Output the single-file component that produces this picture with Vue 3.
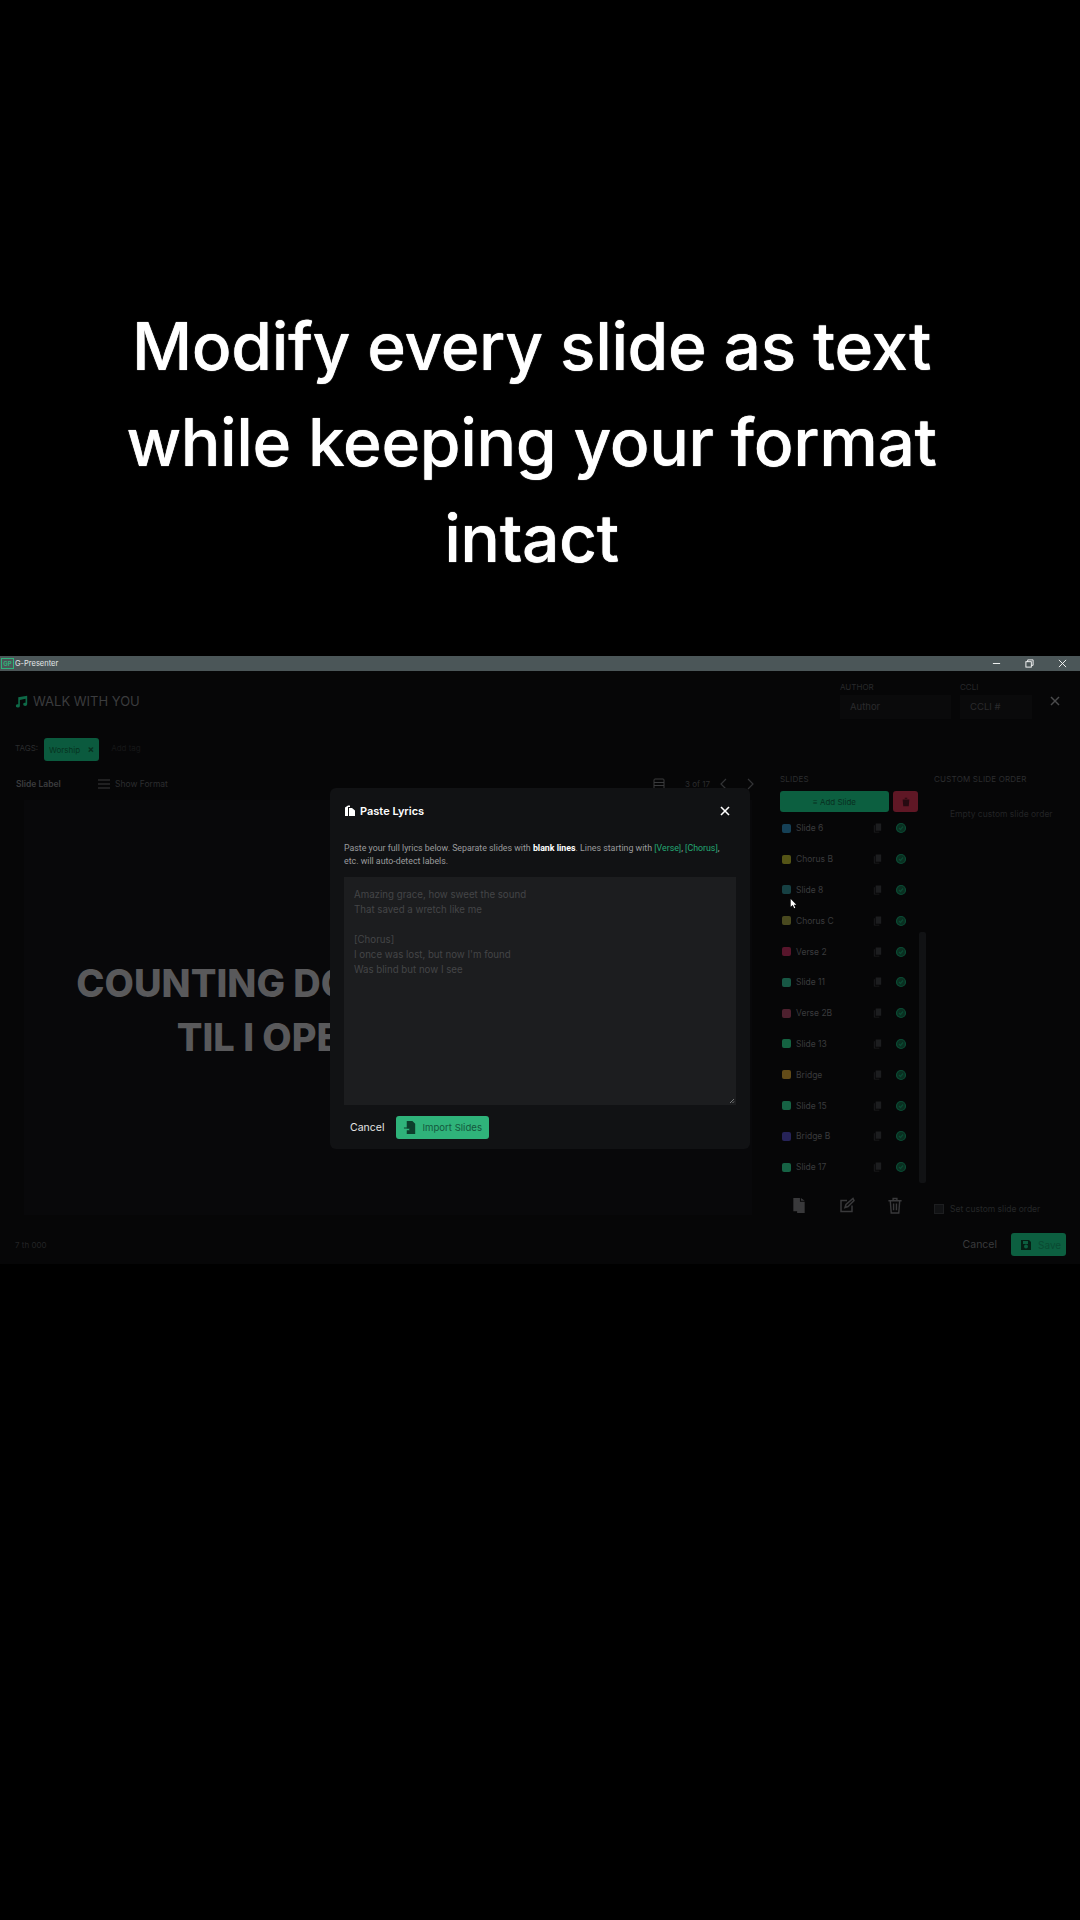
<template>
  <div class="page">
    <div class="caption">Modify every slide as text<br />while keeping your format<br />intact</div>

    <div class="app">
      <div class="titlebar">
        <span class="app-logo">GP</span>
        <span class="app-name">G-Presenter</span>
        <div class="win-btns">
          <svg viewBox="0 0 10 10"><line x1="1" y1="5" x2="9" y2="5" /></svg>
          <svg viewBox="0 0 10 10"><rect x="1" y="3" width="6" height="6" /><polyline points="3 3 3 1 9 1 9 7 7 7" /></svg>
          <svg viewBox="0 0 10 10"><line x1="1" y1="1" x2="9" y2="9" /><line x1="9" y1="1" x2="1" y2="9" /></svg>
        </div>
      </div>

      <div class="header">
        <svg class="note-icon" viewBox="0 0 16 16" fill="currentColor">
          <path d="M15 1v10.5a2.5 2 0 1 1-2-2V4.6L6 6v7.5a2.5 2 0 1 1-2-2V2.8z" />
        </svg>
        <span class="song-title">WALK WITH YOU</span>
        <div class="fields">
          <div class="field author">
            <label>AUTHOR</label>
            <div class="input">Author</div>
          </div>
          <div class="field key">
            <label>CCLI</label>
            <div class="input">CCLI #</div>
          </div>
        </div>
        <svg class="header-close" viewBox="0 0 10 10"><line x1="1" y1="1" x2="9" y2="9" /><line x1="9" y1="1" x2="1" y2="9" /></svg>
      </div>

      <div class="tags">
        <span class="tags-label">TAGS:</span>
        <span class="tag">Worship <b>×</b></span>
        <span class="add-tag">Add tag</span>
      </div>

      <div class="main">
        <div class="editor">
          <div class="toolbar">
            <span class="slide-label">Slide Label</span>
            <svg class="tool-icon lines" viewBox="0 0 12 12"><line x1="0" y1="2" x2="12" y2="2" /><line x1="0" y1="6" x2="12" y2="6" /><line x1="0" y1="10" x2="12" y2="10" /></svg>
            <span class="show-format">Show Format</span>
            <svg class="tool-icon grid-icon" viewBox="0 0 12 12"><rect x="1" y="1" width="10" height="10" rx="1" /><line x1="1" y1="4.5" x2="11" y2="4.5" /><line x1="1" y1="7.5" x2="11" y2="7.5" /></svg>
            <span class="count">3 of 17</span>
            <svg class="chev" viewBox="0 0 8 12"><polyline points="6 1 1 6 6 11" /></svg>
            <svg class="chev" viewBox="0 0 8 12"><polyline points="2 1 7 6 2 11" /></svg>
          </div>
          <div class="preview">
            <div class="preview-text">COUNTING DOWN THE SECONDS<br />TIL I OPEN THE DOORS</div>
          </div>
        </div>

        <div class="slides">
          <div class="col-title">SLIDES</div>
          <div class="slide-actions">
            <button class="add-btn">≡ Add Slide</button>
            <button class="del-btn">
              <svg viewBox="0 0 12 12" fill="currentColor"><path d="M2 3h8l-.7 8H2.7zM4.500 1h3v1h-3z" /></svg>
            </button>
          </div>
          <div class="slide-list">
            <div v-for="s in slideRows" :key="s.name" class="slide-row">
              <span class="swatch" :style="{ background: s.color }"></span>
              <span class="slide-name">{{ s.name }}</span>
              <svg class="row-copy" viewBox="0 0 12 12" fill="currentColor"><path d="M4 1h6v8H4zM2 3h1v7h5v1H2z" /></svg>
              <svg class="row-ok" viewBox="0 0 12 12"><circle cx="6" cy="6" r="4.500" /><polyline points="4 6 5.500 7.500 8 4.500" /></svg>
            </div>
            <div class="scroll-thumb"></div>
          </div>
          <div class="slide-tools">
            <svg viewBox="0 0 16 18" fill="currentColor"><path d="M2 1h7v4h5v12H6V15H2zM10 1l4 3h-4z" /></svg>
            <svg viewBox="0 0 16 16" fill="none" stroke="currentColor" stroke-width="1.500"><path d="M8 3H2v11h11V8" /><path d="M6 10l1-3 7-6 1 2-6 6z" /></svg>
            <svg viewBox="0 0 16 18" fill="none" stroke="currentColor" stroke-width="1.500"><path d="M1 4h14M6 4V1.500h4V4M3 4l1 13h8l1-13M6.500 7v7M9.500 7v7" /></svg>
          </div>
        </div>

        <div class="custom">
          <div class="col-title">CUSTOM SLIDE ORDER</div>
          <div class="custom-empty">Empty custom slide order</div>
          <div class="custom-check">
            <span class="checkbox"></span>
            <span>Set custom slide order</span>
          </div>
        </div>
      </div>

      <div class="footer">
        <span class="footer-info">7 th 000</span>
        <span class="footer-cancel">Cancel</span>
        <button class="save-btn">
          <svg viewBox="0 0 12 12" fill="currentColor"><path d="M1 1h8l2 2v8H1zM3 2v3h5V2zM4 7.500a2 2 0 1 0 4 0a2 2 0 1 0-4 0z" fill-rule="evenodd" /></svg>
          Save
        </button>
      </div>

      <!-- paste dialog sits over the dimmed editor -->
      <div class="overlay">
        <div class="modal">
          <div class="modal-head">
            <svg class="paste-icon" viewBox="0 0 12 12" fill="currentColor"><path d="M1 2.500 L4 .5 L6 .5 L6 2 L4 2 L4 11 L1 11 Z M5 3h3l3 2.500V11H5z" /></svg>
            <span class="modal-title">Paste Lyrics</span>
            <svg class="modal-close" viewBox="0 0 10 10"><line x1="1" y1="1" x2="9" y2="9" /><line x1="9" y1="1" x2="1" y2="9" /></svg>
          </div>
          <p class="modal-desc">
            Paste your full lyrics below. Separate slides with <b>blank lines</b>. Lines starting with <em>[Verse]</em>, <em>[Chorus]</em>, etc. will auto-detect labels.
          </p>
          <div class="lyrics-box">
            <div v-for="(line, i) in placeholder" :key="i" class="lyric-line">{{ line }}</div>
            <svg class="resize-grip" viewBox="0 0 6 6"><line x1="1" y1="5" x2="5" y2="1" /><line x1="3.500" y1="5" x2="5" y2="3.500" /></svg>
          </div>
          <div class="modal-foot">
            <span class="modal-cancel">Cancel</span>
            <button class="import-btn">
              <svg viewBox="0 0 16 16"><path fill="#0d3f2c" d="M4 1h6l3 3v11H4v-4h3V9H4z" /><path d="M1 8.500h8M7 6.500l2 2-2 2" fill="none" stroke="#0d3f2c" stroke-width="1.200" /></svg>
              Import Slides
            </button>
          </div>
        </div>
      </div>

      <svg class="cursor" viewBox="0 0 10 14"><path fill="#fff" d="M1 0v11l3-2.500 2 4.500 1.500-.7-2-4.300H9z" /></svg>
    </div>
  </div>
</template>

<script setup>
const slideRows = [
  { name: "Slide 6", color: "#1c5a78" },
  { name: "Chorus B", color: "#76761c" },
  { name: "Slide 8", color: "#1e5a5c" },
  { name: "Chorus C", color: "#66662a" },
  { name: "Verse 2", color: "#7a1c3a" },
  { name: "Slide 11", color: "#1f7a5e" },
  { name: "Verse 2B", color: "#6c2c3e" },
  { name: "Slide 13", color: "#1b8a5a" },
  { name: "Bridge", color: "#8a6a20" },
  { name: "Slide 15", color: "#1e8a5e" },
  { name: "Bridge B", color: "#35307a" },
  { name: "Slide 17", color: "#1e8a5e" },
];

const placeholder = [
  "Amazing grace, how sweet the sound",
  "That saved a wretch like me",
  "\u00a0",
  "[Chorus]",
  "I once was lost, but now I'm found",
  "Was blind but now I see",
];
</script>

<style scoped>
.page {
  width: 1080px;
  height: 1920px;
  background: #000;
  font-family: Inter, "Liberation Sans", sans-serif;
  overflow: hidden;
}

.caption {
  height: 656px;
  box-sizing: border-box;
  padding: 298px 17px 0 0;
  text-align: center;
  color: #fff;
  font-size: 66px;
  font-weight: 500;
  line-height: 96px;
  letter-spacing: -0.4px;
  text-shadow: 0 0 1px #fff;
}

.app {
  position: relative;
  height: 608px;
  background: #060607;
  display: flex;
  flex-direction: column;
}

.titlebar {
  height: 15px;
  flex-shrink: 0;
  background: #4b5658;
  display: flex;
  align-items: center;
  padding: 0 1px;
}

.app-logo {
  width: 11px;
  height: 9px;
  border: 1px solid #2fb37a;
  color: #2fb37a;
  font-size: 6px;
  line-height: 9px;
  text-align: center;
  font-weight: 700;
}

.app-name {
  margin-left: 1px;
  font-size: 7.500px;
  color: #e4e8e8;
}

.win-btns {
  margin-left: auto;
  display: flex;
  gap: 24px;
  padding-right: 12px;
}

.win-btns svg {
  width: 9px;
  height: 9px;
  fill: none;
  stroke: #fff;
  stroke-width: 1;
}

.header {
  height: 57px;
  flex-shrink: 0;
  display: flex;
  align-items: center;
  padding: 0 15px;
}

.note-icon {
  width: 13px;
  height: 15px;
  color: #0e6a48;
  margin-top: 3px;
}

.song-title {
  margin-left: 5px;
  margin-top: 3px;
  font-size: 13px;
  color: #3b3c3e;
}

.fields {
  margin-left: auto;
  display: flex;
  gap: 9px;
  margin-right: 18px;
}

.field label {
  display: block;
  font-size: 8px;
  line-height: 12px;
  margin-bottom: 2px;
  color: #28292b;
}

.input {
  height: 24px;
  line-height: 24px;
  padding-left: 10px;
  font-size: 9.500px;
  color: #2a2b2d;
  background: #0a0a0b;
}

.author .input {
  width: 101px;
}

.key .input {
  width: 62px;
}

.header-close {
  width: 10px;
  height: 10px;
  margin-right: 5px;
  margin-top: 3px;
  stroke: #4a4b4d;
  stroke-width: 1.400;
}

.tags {
  height: 40px;
  flex-shrink: 0;
  display: flex;
  align-items: center;
  padding-left: 15px;
  font-size: 8px;
  color: #2a2b2d;
}

.tag {
  margin-left: 6px;
  width: 55px;
  height: 23px;
  line-height: 23px;
  text-align: center;
  border-radius: 3px;
  background: #0b5a3e;
  color: #06331f;
  font-size: 8px;
  margin-top: 2px;
}

.tag b {
  margin-left: 5px;
  font-size: 10px;
}

.add-tag {
  margin-left: 12px;
  color: #161718;
}

.main {
  flex: 1;
  min-height: 0;
  display: flex;
  padding-left: 16px;
}

.editor {
  width: 736px;
  display: flex;
  flex-direction: column;
}

.toolbar {
  height: 32px;
  flex-shrink: 0;
  display: flex;
  align-items: center;
  font-size: 8.500px;
  color: #2c2d2f;
}

.slide-label {
  width: 82px;
  font-weight: 600;
  color: #3c3d3f;
}

.tool-icon {
  width: 12px;
  height: 12px;
  fill: none;
  stroke: #3a3b3d;
  stroke-width: 1;
}

.show-format {
  margin-left: 5px;
}

.grid-icon {
  margin-left: auto;
}

.count {
  margin-left: 20px;
  margin-right: 10px;
  font-size: 8px;
}

.chev {
  width: 8px;
  height: 12px;
  fill: none;
  stroke: #333436;
  stroke-width: 1.200;
  margin-right: 18px;
}

.chev:last-child {
  margin-right: -2px;
}

.preview {
  height: 411px;
  margin-left: 8px;
  background: #08080a;
  display: flex;
  align-items: center;
  justify-content: center;
  padding-top: 4px;
}

.preview-text {
  text-align: center;
  font-size: 38px;
  font-weight: 800;
  line-height: 54px;
  color: #59595b;
  white-space: nowrap;
}

.slides {
  width: 146px;
  margin-left: 28px;
  display: flex;
  flex-direction: column;
}

.col-title {
  margin-top: 5px;
  font-size: 8px;
  line-height: 12px;
  letter-spacing: 0.2px;
  color: #2c2d2f;
}

.slide-actions {
  display: flex;
  margin-top: 6px;
  gap: 4px;
  width: 138px;
}

.slide-actions button {
  border: none;
  height: 21px;
  padding: 0;
  border-radius: 3px;
  font-family: inherit;
}

.add-btn {
  width: 109px;
  background: #0c5f40;
  color: #08301f;
  font-size: 8px;
}

.del-btn {
  width: 25px;
  background: #5f1725;
  color: #260a11;
}

.del-btn svg {
  width: 10px;
  height: 10px;
  display: block;
  margin: 0 auto;
}

.slide-list {
  position: relative;
  margin-top: 1px;
}

.slide-row {
  height: 30.800px;
  display: flex;
  align-items: center;
  padding-left: 2px;
  width: 127px;
  box-sizing: border-box;
}

.swatch {
  width: 9px;
  height: 9px;
  border-radius: 2px;
  opacity: 0.7;
}

.slide-name {
  margin-left: 5px;
  font-size: 8.500px;
  color: #3a3b3d;
}

.row-copy {
  margin-left: auto;
  width: 11px;
  height: 12px;
  color: #1c1d1f;
}

.row-ok {
  margin-left: 12px;
  width: 12px;
  height: 12px;
  fill: #0a2f21;
  stroke: #0a4a33;
  stroke-width: 1.200;
}

.scroll-thumb {
  position: absolute;
  left: 139px;
  top: 119px;
  width: 7px;
  height: 251px;
  border-radius: 2px;
  background: #111214;
}

.slide-tools {
  display: flex;
  gap: 32px;
  padding-left: 11px;
  margin-top: 14px;
  color: #39393b;
}

.slide-tools svg {
  width: 16px;
  height: 17px;
}

.custom {
  width: 130px;
  margin-left: 8px;
  display: flex;
  flex-direction: column;
  padding-bottom: 11px;
  box-sizing: border-box;
}

.custom-empty {
  margin-top: 24px;
  margin-left: 16px;
  font-size: 8.500px;
  color: #222325;
}

.custom-check {
  margin-top: auto;
  display: flex;
  align-items: center;
  gap: 6px;
  font-size: 8.500px;
  color: #252628;
}

.checkbox {
  width: 8px;
  height: 8px;
  border: 1px solid #1d1e20;
  background: #111214;
}

.footer {
  height: 39px;
  flex-shrink: 0;
  display: flex;
  align-items: center;
  padding: 0 14px 0 15px;
}

.footer-info {
  font-size: 8px;
  color: #232426;
}

.footer-cancel {
  margin-left: auto;
  font-size: 10.500px;
  color: #3a3b3d;
}

.save-btn {
  margin-left: 14px;
  width: 55px;
  height: 23px;
  border: none;
  border-radius: 3px;
  background: #0c5f40;
  color: #0a4a32;
  font-family: inherit;
  font-size: 10px;
  display: flex;
  align-items: center;
  gap: 6px;
  padding: 0 0 0 9px;
}

.save-btn svg {
  width: 12px;
  height: 12px;
  color: #052015;
}

.overlay {
  position: absolute;
  inset: 0;
  display: flex;
  justify-content: center;
  align-items: flex-start;
  padding-top: 132px;
  pointer-events: none;
}

.modal {
  width: 420px;
  height: 361px;
  box-sizing: border-box;
  background: #111214;
  border-radius: 6px;
  padding: 0 14px;
  color: #e8e8e8;
}

.modal-head {
  height: 46px;
  display: flex;
  align-items: center;
}

.paste-icon {
  width: 12px;
  height: 12px;
  color: #fff;
}

.modal-title {
  margin-left: 4px;
  font-size: 11px;
  font-weight: 600;
  color: #fff;
}

.modal-close {
  margin-left: auto;
  margin-right: 6px;
  width: 10px;
  height: 10px;
  stroke: #fff;
  stroke-width: 1.600;
}

.modal-desc {
  margin: 8px 0 0;
  width: 385px;
  font-family: Roboto, "Liberation Sans", sans-serif;
  font-size: 8.800px;
  line-height: 13px;
  color: #9a9b9d;
}

.modal-desc b {
  color: #fff;
  font-weight: 700;
}

.modal-desc em {
  font-style: normal;
  color: #23a873;
}

.lyrics-box {
  position: relative;
  margin-top: 9px;
  height: 228px;
  box-sizing: border-box;
  padding: 10px 10px;
  background: #1c1d1f;
}

.lyric-line {
  font-size: 9.700px;
  line-height: 15px;
  color: #444547;
}

.resize-grip {
  position: absolute;
  right: 1px;
  bottom: 1px;
  width: 6px;
  height: 6px;
  stroke: #8a8b8d;
  stroke-width: 0.800;
}

.modal-foot {
  display: flex;
  align-items: center;
  margin-top: 11px;
}

.modal-cancel {
  margin-left: 6px;
  font-size: 10.500px;
  color: #e4e4e4;
}

.import-btn {
  margin-left: 12px;
  width: 93px;
  height: 23px;
  border: none;
  border-radius: 3px;
  background: #2fb37a;
  color: #15583d;
  font-family: inherit;
  font-size: 9.600px;
  display: flex;
  align-items: center;
  gap: 4px;
  padding: 0 0 0 7px;
}

.import-btn svg {
  width: 15px;
  height: 15px;
}

.cursor {
  position: absolute;
  left: 790px;
  top: 243px;
  width: 7px;
  height: 10px;
}
</style>
